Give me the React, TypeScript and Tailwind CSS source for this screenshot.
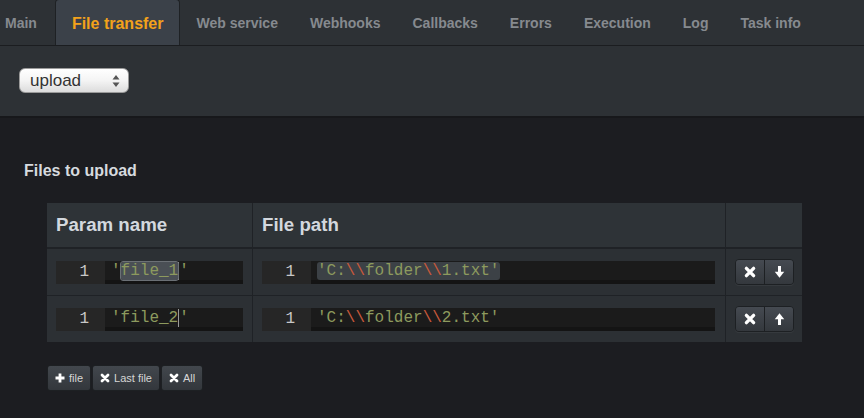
import React from "react";

const tabs = ["Main", "File transfer", "Web service", "Webhooks", "Callbacks", "Errors", "Execution", "Log", "Task info"];

function Str({ text }: { text: string }) {
    // colour backslash escapes red, rest olive
    const parts = text.split(/(\\\\)/);
    return (
        <>
            {parts.map((p, i) =>
                p === "\\\\" ? (
                    <span key={i} className="text-[#c9593b]">{p}</span>
                ) : (
                    <span key={i}>{p}</span>
                )
            )}
        </>
    );
}

function CodeBox({ children }: { children: React.ReactNode }) {
    return (
        <div className="flex h-[23px] w-full font-['Liberation_Mono',monospace] text-[16px] leading-[23px]">
            <div className="w-[49px] shrink-0 bg-[#262626] text-right pr-[16px] text-[#c8c8c8]">1</div>
            <div className="relative flex-1 bg-[#1b1b1b] border-b-[4px] border-[#141414] pl-[6px] leading-[19px] pt-[1px] text-[#8d9a5e] whitespace-pre">
                {children}
            </div>
        </div>
    );
}

function IconX({ size = 11 }: { size?: number }) {
    return (
        <svg width={size} height={size} viewBox="0 0 10 10">
            <path d="M2 2 L8 8 M8 2 L2 8" stroke="white" strokeWidth="2.8" strokeLinecap="round" />
        </svg>
    );
}

function Arrow({ up }: { up?: boolean }) {
    return (
        <svg width="11" height="14" viewBox="0 0 10 13" className={up ? "rotate-180" : ""}>
            <path d="M5 1 V9" stroke="white" strokeWidth="2.8" />
            <path d="M0.6 6.3 L5 11.8 L9.4 6.3 Z" fill="white" />
        </svg>
    );
}

function RowButtons({ up }: { up?: boolean }) {
    return (
        <div className="flex h-[26px] rounded-[4px] border border-[#1d2023] overflow-hidden shadow-[0_1px_0_rgba(255,255,255,0.05)]">
            <div className="w-[29px] flex items-center justify-center bg-gradient-to-b from-[#454a51] to-[#34383d] border-r border-[#1d2023]">
                <IconX size={12} />
            </div>
            <div className="w-[28px] flex items-center justify-center bg-gradient-to-b from-[#454a51] to-[#34383d]">
                <Arrow up={up} />
            </div>
        </div>
    );
}

function Btn({ icon, label }: { icon: React.ReactNode; label: string }) {
    return (
        <div className="h-[26px] px-[7px] flex items-center gap-[4px] rounded-[3px] bg-gradient-to-b from-[#42474d] to-[#33373c] border border-[#1d2023]">
            {icon}
            {label}
        </div>
    );
}

export default function App() {
    return (
        <div className="w-[864px] h-[418px] overflow-hidden bg-[#1c1d21] font-['Liberation_Sans',Arial,sans-serif]">
            {/* tabs */}
            <div className="h-[46px] bg-[#2d3135] border-b border-[#1b1d20] flex items-end overflow-hidden">
                <div className="flex -ml-[11px] h-[46px]">
                    {tabs.map((t) => {
                        const active = t === "File transfer";
                        return (
                            <div
                                key={t}
                                className={
                                    active
                                        ? "h-[46px] -mb-px ml-[2px] px-[16px] pt-[3px] flex items-center rounded-t-[4px] border border-b-0 border-[#1e2124] bg-[#3b4149] text-[#f3a21b] text-[16px] font-bold"
                                        : "h-[46px] px-[15px] pt-[3px] flex items-center border border-transparent text-[#868a8f] text-[14px] font-bold"
                                }
                            >
                                {t}
                            </div>
                        );
                    })}
                </div>
            </div>
            {/* options */}
            <div className="h-[72px] bg-[#2d3135] border-b-[2px] border-[#17181b] pt-[22px] pl-[19px]">
                <div className="w-[110px] h-[25px] rounded-[6px] border border-[#9a9a9a] bg-gradient-to-b from-white via-[#f4f4f4] to-[#dcdcdc] flex items-center justify-between pl-[10px] pr-[8px] text-[17px] text-[#333]">
                    <span>upload</span>
                    <svg width="8" height="14" viewBox="0 0 8 14">
                        <path d="M4 1 L7.5 5.5 H0.5 Z M4 13 L7.5 8.5 H0.5 Z" fill="#555" />
                    </svg>
                </div>
            </div>
            {/* body */}
            <div className="pl-[24px] pt-[43px]">
                <div className="text-[16px] font-bold text-[#d6dadf] leading-[20px]">Files to upload</div>
                <div className="ml-[23px] mt-[22px] w-[755px] grid grid-cols-[205px_472px_76px] gap-x-[1px] bg-[#1f2226]">
                    <div className="h-[44px] bg-[#2e3337] flex items-center pl-[9px] text-[18.7px] font-bold text-[#d3d8de]">Param name</div>
                    <div className="h-[44px] bg-[#2e3337] flex items-center pl-[9px] text-[18.7px] font-bold text-[#d3d8de]">File path</div>
                    <div className="h-[44px] bg-[#2e3337]"></div>

                    <div className="mt-[2px] h-[46px] bg-[#2c3034] flex items-center px-[9px]">
                        <CodeBox>
                            {"'"}
                            <span className="rounded-[2px] bg-[#4a4f55] outline outline-1 outline-[#6b7075]">file_1</span>
                            <span className="border-l border-[#9a9a9a]">{"'"}</span>
                        </CodeBox>
                    </div>
                    <div className="mt-[2px] h-[46px] bg-[#2c3034] flex items-center pl-[9px] pr-[10px]">
                        <CodeBox>
                            <span className="rounded-[3px] bg-[#3c4146] pr-[1px]">
                                <Str text={"'C:\\\\folder\\\\1.txt'"} />
                            </span>
                        </CodeBox>
                    </div>
                    <div className="mt-[2px] h-[46px] bg-[#2c3034] flex items-center pl-[9px]">
                        <RowButtons />
                    </div>

                    <div className="mt-[1px] h-[46px] bg-[#2c3034] flex items-center px-[9px]">
                        <CodeBox>
                            {"'file_2"}
                            <span className="border-l border-[#9a9a9a]">{"'"}</span>
                        </CodeBox>
                    </div>
                    <div className="mt-[1px] h-[46px] bg-[#2c3034] flex items-center pl-[9px] pr-[10px]">
                        <CodeBox>
                            <Str text={"'C:\\\\folder\\\\2.txt'"} />
                        </CodeBox>
                    </div>
                    <div className="mt-[1px] h-[46px] bg-[#2c3034] flex items-center pl-[9px]">
                        <RowButtons up />
                    </div>
                </div>
                <div className="ml-[23px] mt-[23px] flex gap-[1px] text-[11px] text-[#d6d6d6]">
                    <Btn
                        icon={
                            <svg width="10" height="10" viewBox="0 0 10 10">
                                <path d="M5 0.5 V9.5 M0.5 5 H9.5" stroke="white" strokeWidth="2.8" />
                            </svg>
                        }
                        label="file"
                    />
                    <Btn icon={<IconX size={10} />} label="Last file" />
                    <Btn icon={<IconX size={10} />} label="All" />
                </div>
            </div>
        </div>
    );
}
